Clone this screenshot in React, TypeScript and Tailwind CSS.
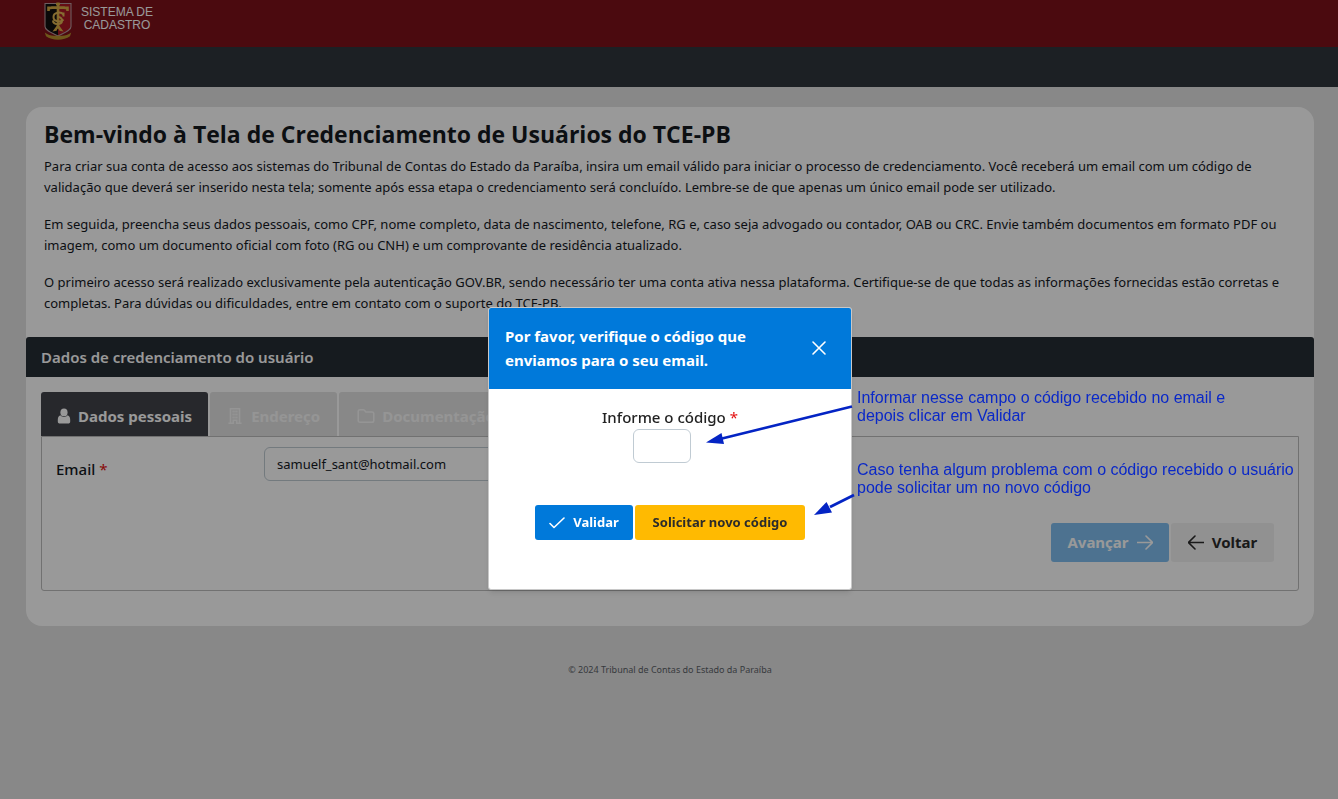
import { useState } from "react";
import type { ReactNode } from "react";

function Crest() {
  return (
    <svg viewBox="0 0 28 38" className="h-[38px] w-7" aria-hidden="true">
      <path d="M1 1.500h26v23c0 4-6 6-13 9.500C7 30.500 1 28.500 1 24.500z" fill="#101010" />
      <path d="M14 1.500h13v23c0 4-6 6-13 9.500z" fill="#a81824" />
      <path d="M1 1.500h26v23c0 4-6 6-13 9.500C7 30.500 1 28.500 1 24.500z" fill="none" stroke="#b79a9d" strokeWidth="1.100" />
      <path d="M4.500 6.500c3-1.500 16-1.500 19 0M4.500 4.500v4.500M23.500 4.500v4.500M14 .5v26M12 2h4" fill="none" stroke="#d8ac45" strokeWidth="2.600" />
      <path d="M19.500 12.500c-2.500-3-10-2.500-10 2.500s7 5.500 10 2.500M9 18.500c0 4.500 9 5 9 .5s-4-4-4-4M19.500 10.500v4" fill="none" stroke="#e0b654" strokeWidth="2" />
      <path d="M14 22l-5.500 7.500 4-.8 1.500-2.700 1.500 2.700 4 .8z" fill="#d8ac45" />
      <path d="M.8 30.500c3 2.200 6 3.300 9 3.300h8.400c3 0 6-1.100 9-3.300l-1.200 3.700c-6 4.600-18 4.600-24 0z" fill="#b8912c" />
    </svg>
  );
}

function PersonIcon() {
  return (
    <svg viewBox="0 0 14 16" className="h-4 w-[14px]" fill="currentColor" aria-hidden="true">
      <ellipse cx="7" cy="4.4" rx="3.600" ry="3.900" />
      <path d="M3.400 7.300C1.400 8.100.8 9.800.8 12v1.500c0 1.400.8 2 2.200 2h8c1.400 0 2.200-.6 2.200-2V12c0-2.200-.6-3.900-2.600-4.700C9.700 8.400 8.500 9 7 9s-2.700-.6-3.600-1.700z" />
    </svg>
  );
}

function BuildingIcon() {
  return (
    <svg viewBox="0 0 14 16" className="mr-0.5 h-4 w-[14px]" fill="none" stroke="currentColor" aria-hidden="true">
      <path d="M2.500 15V.8h9V15M.5 15.200h4.800v-3h3.400v3h4.800" strokeWidth="1.600" />
      <path d="M4.400 3.500h5.200M4.400 6.500h5.200M4.400 9.500h5.200" strokeWidth="1.800" strokeDasharray="1.500 .35" />
    </svg>
  );
}

function FolderIcon() {
  return (
    <svg viewBox="0 0 18 16" className="h-4 w-[18px]" fill="none" stroke="currentColor" strokeWidth="1.500" strokeLinejoin="round" aria-hidden="true">
      <path d="M1.200 12.500v-9c0-1.100.7-1.800 1.800-1.800h3.200c.5 0 .9.200 1.200.6L8.800 4H15c1.100 0 1.800.7 1.800 1.800v6.700c0 1.100-.7 1.800-1.800 1.800H3c-1.100 0-1.800-.7-1.800-1.800z" />
    </svg>
  );
}

function LineIcon({ d, className }: { d: string; className: string }) {
  return (
    <svg viewBox="0 0 16 16" className={className} fill="none" stroke="currentColor" strokeWidth="1.600" strokeLinecap="round" strokeLinejoin="round" aria-hidden="true">
      <path d={d} />
    </svg>
  );
}

function Tab({ icon, label, active = false }: { icon: ReactNode; label: string; active?: boolean }) {
  return (
    <button
      type="button"
      role="tab"
      aria-selected={active}
      disabled={!active}
      className={
        "flex h-[44px] items-center gap-[7px] rounded-t-[3px] pt-1 text-[15px] font-bold " +
        (active ? "px-4 bg-[#41434a] text-white" : "pr-[17px] pl-[18px] bg-[#e3e3e3] text-[#f9f9f9]")
      }
    >
      {icon}
      {label}
    </button>
  );
}

function CodeDialog({ onClose }: { onClose: () => void }) {
  const [code, setCode] = useState("");
  return (
    <div className="fixed inset-0 flex items-start justify-center bg-black/40 pt-[307px] pl-0.5">
      <div role="dialog" aria-labelledby="dialog-title" className="relative w-[364px] rounded-[3px] border border-[#c8c8c8] bg-white shadow-md">
        <header className="flex items-center justify-between rounded-t-[2px] bg-[#0079da] px-4 pt-4 pb-[17px] text-white">
          <h2 id="dialog-title" className="w-[270px] text-[15px] leading-6 font-bold">
            Por favor, verifique o código que enviamos para o seu email.
          </h2>
          <button type="button" aria-label="Fechar" onClick={onClose} className="flex size-8 items-center justify-center">
            <LineIcon d="M2 2l12 12M14 2L2 14" className="size-4" />
          </button>
        </header>
        <form className="flex flex-col items-center pt-4 pb-[49px]" onSubmit={(e) => e.preventDefault()}>
          <label htmlFor="code" className="text-[15px] leading-6 font-medium text-[#222]">
            Informe o código <span className="font-normal text-[#e30f0f]">*</span>
          </label>
          <input
            id="code"
            value={code}
            onChange={(e) => setCode(e.target.value)}
            className="mr-4 h-[34px] w-[58px] rounded-md border border-[#c0cbd3] px-3 text-[13px] outline-none"
          />
          <div className="mt-[42px] flex gap-0.5 text-[13px] font-bold">
            <button type="submit" className="flex h-[35px] w-[98px] items-center justify-center gap-2 rounded-[3px] bg-[#0079da] pt-px text-white">
              <LineIcon d="M1 8.500l4 4L15 3" className="size-4" />
              Validar
            </button>
            <button type="button" className="h-[35px] w-[170px] rounded-[3px] bg-[#ffba01] pt-px text-[#2b2b2b]">
              Solicitar novo código
            </button>
          </div>
        </form>
        <Notes />
      </div>
    </div>
  );
}

function Notes() {
  return (
    <>
      <svg viewBox="0 0 160 140" className="pointer-events-none absolute top-[82px] left-[211px] h-[140px] w-40" aria-hidden="true">
        <g stroke="#0424c4" strokeWidth="2.700" fill="#0424c4">
          <path d="M152 16.500L20 49" />
          <path d="M154 105L130 117" />
          <path d="M6 52.500l15.500-9.500 2.500 11z" stroke="none" />
          <path d="M114 125l12.500-13 5.500 10.500z" stroke="none" />
        </g>
      </svg>
      <div className="absolute top-[81px] left-[368px] w-[445px] font-['Liberation_Sans',Arial,sans-serif] text-base leading-[18px] text-[#0a28c8]">
        <p>
          Informar nesse campo o código recebido no email e
          <br />
          depois clicar em Validar
        </p>
        <p className="mt-9">
          Caso tenha algum problema com o código recebido o usuário
          <br />
          pode solicitar um no novo código
        </p>
      </div>
    </>
  );
}

export default function App() {
  const [open, setOpen] = useState(true);
  const [email, setEmail] = useState("samuelf_sant@hotmail.com");
  return (
    <div className="min-h-screen bg-[#e3e3e3] font-['Noto_Sans','Open_Sans',sans-serif] text-[#15191f]">
      <header className="flex h-[47px] items-start gap-[9px] bg-[#7d1119] pt-0.5 pl-11">
        <Crest />
        <p className="pt-1 text-center font-['Liberation_Sans',Arial,sans-serif] text-xs leading-[13px] text-white">
          SISTEMA DE
          <br />
          CADASTRO
        </p>
      </header>
      <nav className="h-10 bg-[#2f363c]" />
      <main className="mx-6 mt-5 ml-[26px] rounded-2xl bg-white pb-[35px]">
        <section className="px-[18px] pt-[11px] pb-[23px] text-[13px] leading-[21px]">
          <h1 className="mb-1.5 font-['Open_Sans','Noto_Sans',sans-serif] text-[23px] leading-8 font-bold">Bem-vindo à Tela de Credenciamento de Usuários do TCE-PB</h1>
          <p>
            Para criar sua conta de acesso aos sistemas do Tribunal de Contas do Estado da Paraíba, insira um email válido para iniciar o processo de credenciamento. Você receberá um email com um código de validação que deverá ser inserido nesta tela; somente após essa etapa o credenciamento será concluído. Lembre-se de que apenas um único email pode ser utilizado.
          </p>
          <p className="mt-4">
            Em seguida, preencha seus dados pessoais, como CPF, nome completo, data de nascimento, telefone, RG e, caso seja advogado ou contador, OAB ou CRC. Envie também documentos em formato PDF ou imagem, como um documento oficial com foto (RG ou CNH) e um comprovante de residência atualizado.
          </p>
          <p className="mt-4">
            O primeiro acesso será realizado exclusivamente pela autenticação GOV.BR, sendo necessário ter uma conta ativa nessa plataforma. Certifique-se de que todas as informações fornecidas estão corretas e completas. Para dúvidas ou dificuldades, entre em contato com o suporte do TCE-PB.
          </p>
        </section>
        <h2 className="rounded-t-[3px] bg-[#262d34] px-[15px] text-[15px] leading-10 font-semibold text-white">Dados de credenciamento do usuário</h2>
        <div className="px-[15px] pt-[15px]">
          <div role="tablist" className="flex gap-0.5">
            <Tab active icon={<PersonIcon />} label="Dados pessoais" />
            <Tab icon={<BuildingIcon />} label="Endereço" />
            <Tab icon={<FolderIcon />} label="Documentação" />
          </div>
          <form className="rounded-b-[3px] border border-[#bcbcbc] px-[14px] pt-2.5 pb-7" onSubmit={(e) => e.preventDefault()}>
            <div className="flex">
              <label htmlFor="email" className="w-[208px] pt-2.5 text-[15px] leading-6 font-medium">
                Email <span className="font-normal text-[#e30f0f]">*</span>
              </label>
              <input
                id="email"
                type="email"
                value={email}
                onChange={(e) => setEmail(e.target.value)}
                className="h-[34px] w-[380px] rounded-md border border-[#c0cbd3] px-3 text-[13px] outline-none"
              />
            </div>
            <div className="mt-[42px] mr-2.5 flex justify-end gap-0.5 text-[15px] font-bold">
              <button type="button" disabled className="flex h-[39px] w-[118px] items-center justify-center gap-2 rounded-[3px] bg-[#80bff1] text-white">
                Avançar
                <LineIcon d="M0 7.500h15M9 1l6.500 6.500L9 14" className="size-4" />
              </button>
              <button type="button" className="flex h-[39px] w-[103px] items-center justify-center gap-2 rounded-[3px] bg-[#f2f2f2] text-[#2b2b2b]">
                <LineIcon d="M16 7.500H1M7 1L.5 7.500 7 14" className="size-4" />
                Voltar
              </button>
            </div>
          </form>
        </div>
      </main>
      <footer className="pt-9 pl-0.5 text-center text-[9px] leading-4 text-[#5c6268]">© 2024 Tribunal de Contas do Estado da Paraíba</footer>
      {open && <CodeDialog onClose={() => setOpen(false)} />}
    </div>
  );
}
